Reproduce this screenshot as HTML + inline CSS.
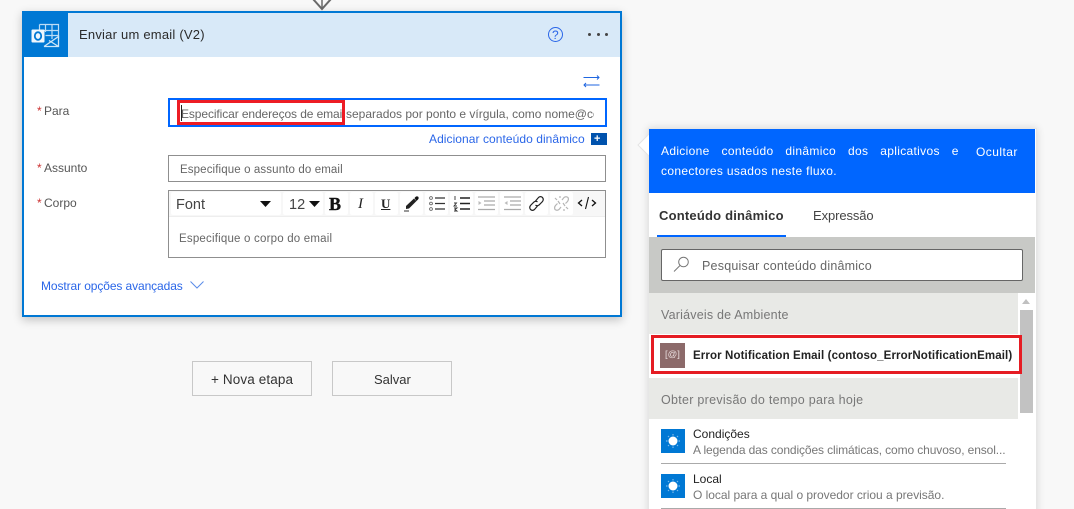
<!DOCTYPE html>
<html lang="pt"><head><meta charset="utf-8"><title>Enviar um email</title>
<style>
html{margin:0;padding:0;width:1074px;height:509px;overflow:hidden}
body{margin:0;padding:0;width:1074px;height:509px;overflow:hidden;background:#f8f8f8;position:relative;font-family:"Liberation Sans",sans-serif;font-size:12px;color:#333}
.a{position:absolute;box-sizing:border-box}
.t{position:absolute;white-space:nowrap;line-height:16px}
svg{position:absolute;overflow:visible}
.tb{position:absolute;top:192px;height:23px;background:#fff;border-radius:2px}
.r{position:absolute;white-space:nowrap;line-height:16px;color:#c33}
</style></head><body>
<svg style="left:311px;top:0" width="22" height="12" viewBox="0 0 22 12"><path d="M2 -1 L11 9 L20 -1" fill="none" stroke="#6a6a6a" stroke-width="2"/><path d="M11 0V9" stroke="#6a6a6a" stroke-width="1.5"/></svg>

<!-- card -->
<div class="a" style="left:22px;top:11px;width:600px;height:306px;background:#fff;border:2px solid #0078d4;box-shadow:0 3px 9px rgba(0,0,0,.22)"></div>
<div class="a" style="left:24px;top:13px;width:596px;height:44px;background:#d8e9f8"></div>
<div class="a" style="left:24px;top:13px;width:44px;height:44px;background:#0078d4"></div>
<svg style="left:24px;top:13px" width="44" height="44" viewBox="0 0 44 44">
<path d="M15.5 11.5H34.5V26M15.5 11.5V19M21.5 11.5V19M28 11.5V26M15.5 17.5H34.5M21.5 22.500H34.500" fill="none" stroke="#bcdcf5" stroke-width="1.2"/>
<path d="M17.500 27.500H35V33H17.500Z" fill="#0078d4"/>
<path d="M20 33.500H34.500V23.500L20 33.500M34.500 33.500L25 27.500" fill="#0078d4" stroke="#cfe6f8" stroke-width="1.3"/>
<rect x="7.500" y="16.500" width="13" height="13" rx="1" fill="#eef6fd"/>
<ellipse cx="14" cy="23" rx="3.200" ry="3.800" fill="none" stroke="#0078d4" stroke-width="1.800"/>
</svg>
<div class="t" style="left:79px;top:27px;font-size:13px;color:#2b2b2b;letter-spacing:.22px">Enviar um email (V2)</div>
<svg style="left:548px;top:27px" width="16" height="16" viewBox="0 0 16 16"><circle cx="7.500" cy="7.500" r="7" fill="none" stroke="#2a66e8" stroke-width="1"/></svg>
<div class="t" style="left:552px;top:27px;font-size:12px;color:#2a66e8">?</div>
<div class="a" style="left:588px;top:33px;width:3px;height:3px;background:#444;border-radius:50%"></div>
<div class="a" style="left:597px;top:33px;width:3px;height:3px;background:#444;border-radius:50%"></div>
<div class="a" style="left:605px;top:33px;width:3px;height:3px;background:#444;border-radius:50%"></div>
<svg style="left:583px;top:74px" width="17" height="14" viewBox="0 0 17 14"><path d="M0.500 3.500H16M14 1.500L16 3.500L14 5.500M16.500 11H1M3 9L1 11L3 13" fill="none" stroke="#1f66e0" stroke-width="1"/></svg>

<!-- Para -->
<div class="r" style="left:37px;top:103px">*</div><div class="t" style="left:44px;top:103px;color:#555">Para</div>
<div class="a" style="left:168px;top:98px;width:439px;height:29px;border:2px solid #0066ff;background:#fff"></div>
<div class="t" style="left:181px;top:106px;color:#666;letter-spacing:-.1px">Especificar endereços de email</div>
<div class="t" style="left:346px;top:106px;color:#666;width:248px;overflow:hidden">separados por ponto e vírgula, como nome@contoso.com</div>
<div class="a" style="left:181px;top:105px;width:1px;height:16px;background:#222"></div>
<div class="a" style="left:177px;top:100px;width:168px;height:25px;border:3px solid #ed1c24"></div>
<div class="t" style="left:429px;top:131px;color:#2a66e8;letter-spacing:.06px">Adicionar conteúdo dinâmico</div>
<div class="a" style="left:591px;top:133px;width:13px;height:12px;background:#0052ad"></div>
<div class="a" style="left:604px;top:133px;width:3px;height:12px;background:#0052ad"></div>
<div class="t" style="left:594px;top:131px;font-size:11px;font-weight:bold;color:#fff">+</div>

<!-- Assunto -->
<div class="r" style="left:37px;top:160px">*</div><div class="t" style="left:44px;top:160px;color:#555">Assunto</div>
<div class="a" style="left:168px;top:155px;width:438px;height:27px;border:1px solid #8f8f8f;background:#fff"></div>
<div class="t" style="left:180px;top:162px;color:#666;font-size:11.500px;letter-spacing:.12px">Especifique o assunto do email</div>

<!-- Corpo -->
<div class="r" style="left:37px;top:195px">*</div><div class="t" style="left:44px;top:195px;color:#555">Corpo</div>
<div class="a" style="left:168px;top:190px;width:438px;height:68px;border:1px solid #8f8f8f;background:#fff"></div>
<div class="a" style="left:169px;top:191px;width:436px;height:26px;background:#f7f7f7;border-bottom:1px solid #eee"></div>
<div class="tb" style="left:171px;width:110px"></div><div class="tb" style="left:283px;width:40px"></div>
<div class="tb" style="left:325px;width:23px"></div><div class="tb" style="left:350px;width:23px"></div><div class="tb" style="left:375px;width:23px"></div>
<div class="tb" style="left:400px;width:23px"></div><div class="tb" style="left:425px;width:23px"></div><div class="tb" style="left:450px;width:23px"></div>
<div class="tb" style="left:475px;width:23px"></div><div class="tb" style="left:500px;width:23px"></div><div class="tb" style="left:525px;width:23px"></div><div class="tb" style="left:550px;width:23px"></div>
<div class="t" style="left:176px;top:197px;font-size:14.500px;color:#444">Font</div>
<svg style="left:260px;top:201px" width="11" height="6"><path d="M0 0H11L5.500 6Z" fill="#111"/></svg>
<div class="t" style="left:289px;top:197px;font-size:14.500px;color:#444">12</div>
<svg style="left:309px;top:201px" width="11" height="6"><path d="M0 0H11L5.500 6Z" fill="#111"/></svg>
<div class="t" style="left:329px;top:195px;font:bold 18px/18px 'Liberation Serif',serif;color:#111;-webkit-text-stroke:.4px #111">B</div>
<div class="t" style="left:358px;top:196px;font:italic 15px/17px 'Liberation Serif',serif;color:#222">I</div>
<div class="t" style="left:381px;top:195px;font:bold 13px/17px 'Liberation Serif',serif;color:#222;text-decoration:underline">U</div>
<svg style="left:403px;top:195px" width="17" height="17" viewBox="0 0 17 17"><path d="M3 11L11 3.500L13.500 6L6 13.500L3 14Z" fill="#222"/><path d="M11.500 3L13 1.500Q14.500 1 15.500 2Q16 3.500 15 4.500L13.500 6Z" fill="#111"/><path d="M1 16H6" stroke="#333" stroke-width="1"/></svg>
<svg style="left:428px;top:195px" width="19" height="17" viewBox="0 0 19 17" fill="none"><circle cx="3" cy="3" r="1.400" stroke="#555" stroke-width=".8"/><circle cx="3" cy="8.500" r="1.400" stroke="#555" stroke-width=".8"/><circle cx="3" cy="14" r="1.400" stroke="#555" stroke-width=".8"/><path d="M7 3H17M7 8.500H17M7 14H17" stroke="#333" stroke-width="1.300"/></svg>
<svg style="left:453px;top:195px" width="18" height="17" viewBox="0 0 18 17" fill="none"><path d="M2 1V5M1 8H3.500L1 11H4M1 13H4L2 14.500L4 16H1" stroke="#333" stroke-width=".9"/><path d="M7 3H17M7 8.500H17M7 14H17" stroke="#222" stroke-width="1.400"/></svg>
<svg style="left:477px;top:195px" width="19" height="17" viewBox="0 0 19 17" fill="none"><path d="M1 2H18M7 6H18M7 10H18M1 14.500H18" stroke="#aaa" stroke-width="1.200"/><path d="M1.500 6L4.500 8L1.500 10Z" fill="#bbb"/></svg>
<svg style="left:503px;top:195px" width="19" height="17" viewBox="0 0 19 17" fill="none"><path d="M1 2H18M7 6H18M7 10H18M1 14.500H18" stroke="#aaa" stroke-width="1.200"/><path d="M4.500 6L1.500 8L4.500 10Z" fill="#bbb"/></svg>
<svg style="left:528px;top:195px" width="17" height="17" viewBox="0 0 17 17" fill="none" stroke="#222" stroke-width="1.200"><path d="M7.500 6L10.500 2.500Q12.500 .8 14.500 2.500Q16 4.500 14.500 6.500L11 10Q9 11.500 7.500 10"/><path d="M9.500 11L6.500 14.500Q4.500 16.200 2.500 14.500Q1 12.500 2.500 10.500L6 7Q8 5.500 9.500 7"/></svg>
<svg style="left:553px;top:195px" width="17" height="17" viewBox="0 0 17 17" fill="none" stroke="#b5b5b5" stroke-width="1.200"><path d="M9 5L11 2.500Q13 1 15 2.500Q16 4.500 14.500 6.500L12.500 8.500"/><path d="M8 12L6 14.500Q4 16 2 14.500Q1 12.500 2.500 10.500L4.500 8.500"/><path d="M5 6L7 9M10 8L12 11M2 3L4 5M13 12L15 14M7 1V3M11 14V16"/></svg>
<svg style="left:577px;top:196px" width="20" height="14" viewBox="0 0 20 14" fill="none" stroke="#111" stroke-width="1.300"><path d="M5 4L1.500 7L5 10M15 4L18.500 7L15 10"/><path d="M11.500 1L8.500 13" stroke-width="1.100"/></svg>
<div class="t" style="left:179px;top:231px;color:#666;font-size:11.500px;letter-spacing:.2px">Especifique o corpo do email</div>

<div class="t" style="left:41px;top:278px;color:#2a66e8;letter-spacing:-.1px">Mostrar opções avançadas</div>
<svg style="left:190px;top:281px" width="14" height="8" viewBox="0 0 14 8"><path d="M.5 .5L7 7L13.500 .5" fill="none" stroke="#5a8ce8" stroke-width="1"/></svg>

<!-- Buttons -->
<div class="a" style="left:192px;top:361px;width:120px;height:35px;border:1px solid #c8c8c8;background:#f8f8f8"></div>
<div class="t" style="left:211px;top:372px;font-size:13.500px;color:#333;letter-spacing:.12px">+ Nova etapa</div>
<div class="a" style="left:332px;top:361px;width:120px;height:35px;border:1px solid #c8c8c8;background:#f8f8f8"></div>
<div class="t" style="left:374px;top:372px;font-size:13px;color:#333">Salvar</div>

<!-- Panel -->
<div class="a" style="left:648px;top:128px;width:389px;height:400px;background:#fff;border:1px solid #e6e6e6;box-shadow:0 0 8px rgba(0,0,0,.14)"></div>
<svg style="left:637px;top:134px" width="12" height="22" viewBox="0 0 12 22"><path d="M12 0L1 11L12 22Z" fill="#fff"/><path d="M12 0L1 11L12 22" fill="none" stroke="#e4e4e4" stroke-width="1"/></svg>
<div class="a" style="left:649px;top:129px;width:386px;height:64px;background:#0066ff"></div>
<div class="t" style="left:661px;top:143px;color:#fff;word-spacing:8.300px;letter-spacing:.32px">Adicione conteúdo dinâmico dos aplicativos e</div>
<div class="t" style="left:976px;top:144px;color:#fff;letter-spacing:.45px">Ocultar</div>
<div class="t" style="left:661px;top:163px;color:#fff;letter-spacing:.35px">conectores usados neste fluxo.</div>
<div class="t" style="left:659px;top:208px;font-size:13px;font-weight:bold;color:#333;letter-spacing:.2px">Conteúdo dinâmico</div>
<div class="t" style="left:813px;top:208px;font-size:13px;color:#444;letter-spacing:-.1px">Expressão</div>
<div class="a" style="left:649px;top:237px;width:386px;height:56px;background:#c8c9c6"></div>
<div class="a" style="left:657px;top:235px;width:129px;height:2px;background:#0066ff"></div>
<div class="a" style="left:661px;top:249px;width:362px;height:32px;background:#fff;border:1px solid #666;border-radius:2px"></div>
<svg style="left:673px;top:256px" width="17" height="17" viewBox="0 0 17 17" fill="none" stroke="#777" stroke-width="1"><circle cx="10.500" cy="6" r="4.800"/><path d="M7 9.500L1 15.500"/></svg>
<div class="t" style="left:702px;top:258px;font-size:12.500px;color:#666;letter-spacing:.22px">Pesquisar conteúdo dinâmico</div>

<div class="a" style="left:649px;top:293px;width:369px;height:41px;background:#e8e9e6"></div>
<div class="t" style="left:661px;top:307px;font-size:12.500px;color:#777;letter-spacing:.2px">Variáveis de Ambiente</div>
<div class="a" style="left:649px;top:378px;width:369px;height:41px;background:#e8e9e6"></div>
<div class="t" style="left:661px;top:392px;font-size:12.500px;color:#777;letter-spacing:.28px">Obter previsão do tempo para hoje</div>

<svg style="left:1022px;top:299px" width="8" height="5"><path d="M0 5L4 0L8 5Z" fill="#c0c0c0"/></svg>
<div class="a" style="left:1020px;top:310px;width:13px;height:103px;background:#c2c2c2"></div>

<div class="a" style="left:651px;top:335px;width:371px;height:39px;border:3px solid #e51c23;background:#fff"></div>
<div class="a" style="left:660px;top:343px;width:25px;height:25px;background:#8c6a6a"></div>
<div class="t" style="left:665px;top:347px;font-size:9.500px;color:#e8dcdc">[@]</div>
<div class="t" style="left:693px;top:348px;font-size:11.500px;font-weight:bold;color:#222;letter-spacing:.12px">Error Notification Email (contoso_ErrorNotificationEmail)</div>

<div class="a" style="left:661px;top:429px;width:24px;height:24px;background:#0078d4"></div>
<svg style="left:661px;top:429px" width="24" height="24" viewBox="0 0 24 24"><circle cx="12" cy="12" r="4.500" fill="#fff"/><path d="M12 5V6.500M12 17.500V19M5 12H6.500M17.500 12H19M7 7L8 8M16 16L17 17M7 17L8 16M16 8L17 7" stroke="#7db9ea" stroke-width="1.200"/></svg>
<div class="t" style="left:693px;top:426px;color:#222;font-size:12px">Condições</div>
<div class="t" style="left:693px;top:442px;color:#777;letter-spacing:-.11px">A legenda das condições climáticas, como chuvoso, ensol...</div>
<div class="a" style="left:661px;top:463px;width:345px;height:1px;background:#aaa"></div>

<div class="a" style="left:661px;top:474px;width:24px;height:24px;background:#0078d4"></div>
<svg style="left:661px;top:474px" width="24" height="24" viewBox="0 0 24 24"><circle cx="12" cy="12" r="4.500" fill="#fff"/><path d="M12 5V6.500M12 17.500V19M5 12H6.500M17.500 12H19M7 7L8 8M16 16L17 17M7 17L8 16M16 8L17 7" stroke="#7db9ea" stroke-width="1.200"/></svg>
<div class="t" style="left:693px;top:471px;color:#222;font-size:12px">Local</div>
<div class="t" style="left:693px;top:487px;color:#777;letter-spacing:-.03px">O local para a qual o provedor criou a previsão.</div>
<div class="a" style="left:661px;top:508px;width:345px;height:1px;background:#aaa"></div>
</body></html>
